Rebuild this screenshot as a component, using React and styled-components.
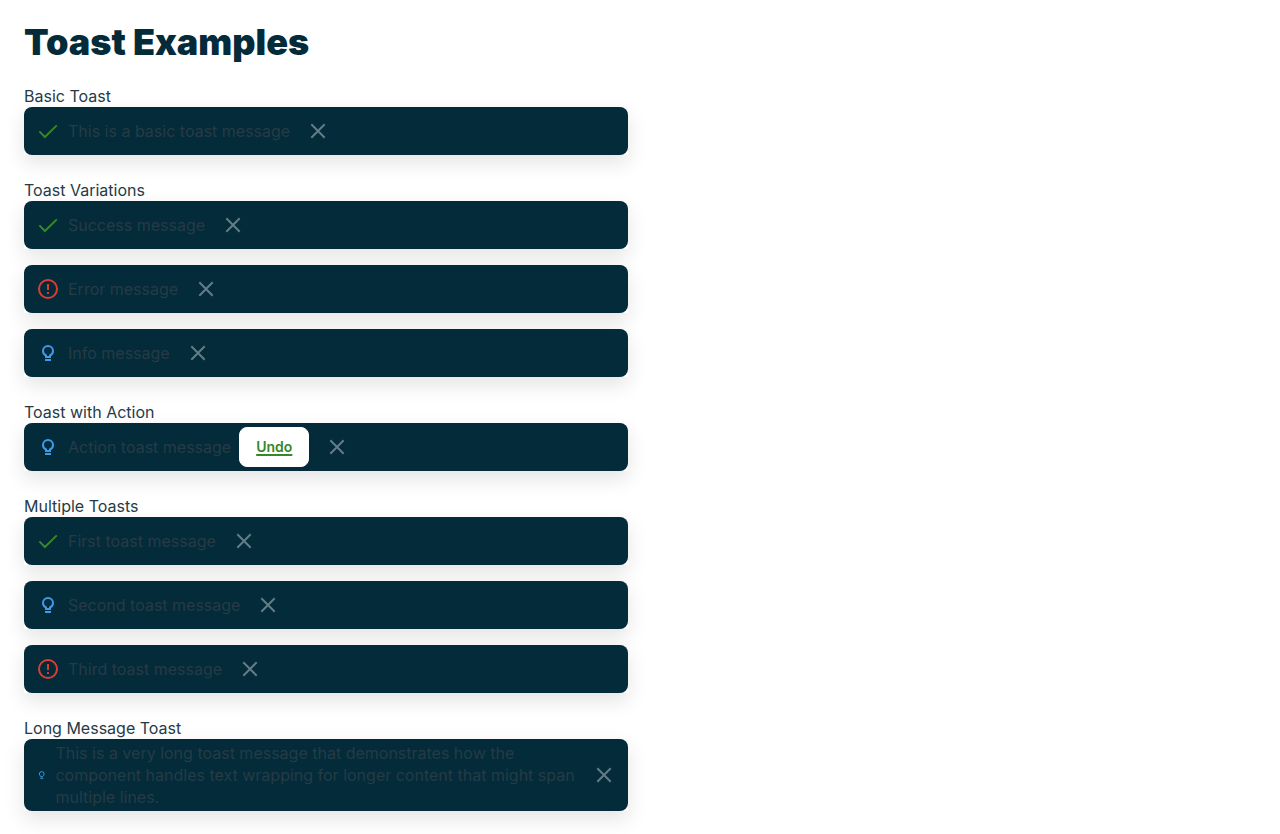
import React, { useId } from "react";
import styled, { createGlobalStyle } from "styled-components";

const GlobalStyle = createGlobalStyle`
  *, *::before, *::after { box-sizing: border-box; }
  body {
    margin: 0;
    background: #fff;
    color: #263b46;
    font: 400 16px/22px Inter, "Liberation Sans", sans-serif;
  }
`;

const Page = styled.main`
  display: grid;
  grid-template-columns: 1fr 1fr;
  column-gap: 24px;
  padding: 24px;
`;

const Column = styled.div`
  display: flex;
  flex-direction: column;
  gap: 24px;
`;

const Title = styled.h1`
  margin: 0;
  color: #032b3a;
  font-size: 36px;
  font-weight: 900;
  line-height: 37px;
`;

const Label = styled.h2`
  margin: 0;
  font-size: 16px;
  font-weight: 400;
  line-height: 22px;
`;

const Stack = styled.div`
  display: flex;
  flex-direction: column;
  gap: 16px;
`;

const Shadow = styled.div`
  box-shadow: 0 8px 20px rgba(0, 0, 0, 0.11);
`;

const ToastBox = styled.div`
  display: flex;
  align-items: center;
  gap: 8px;
  min-height: 48px;
  padding: 3px 4px 3px 12px;
  border-radius: 8px;
  background: #032b3a;
`;

const tones = { success: "#368727", error: "#da3e32", info: "#3d9be9" };

const StatusIcon = styled.svg`
  width: 24px;
  height: 24px;
  min-width: 0;
  fill: none;
  stroke: ${(p) => tones[p.$tone]};
  stroke-width: 2;
`;

const Message = styled.span`
  color: #263b46;
`;

const ActionButton = styled.button`
  flex: none;
  height: 40px;
  padding: 0 16px;
  border: 1px solid #fff;
  border-radius: 8px;
  background: #fff;
  color: #368727;
  font: 600 14px/20px Inter, "Liberation Sans", sans-serif;
  text-decoration: underline;
  text-decoration-thickness: 2px;
  text-underline-offset: 2px;
  cursor: pointer;
`;

const CloseButton = styled.button`
  display: flex;
  flex: none;
  align-items: center;
  justify-content: center;
  width: 40px;
  height: 40px;
  padding: 0;
  border: 0;
  border-radius: 8px;
  background: transparent;
  color: #647c87;
  cursor: pointer;
`;

const CloseIcon = styled.svg`
  width: 24px;
  height: 24px;
  fill: none;
  stroke: currentColor;
  stroke-width: 2;
`;

const shapes = {
  success: <path d="M3.4 12.4 8.9 18 20.8 6.4" />,
  error: (
    <>
      <circle cx="12" cy="12" r="9" />
      <path d="M12 7v6M12 15v2" />
    </>
  ),
  info: (
    <>
      <path d="M10 16v-1.6C8.2 13.5 7 11.8 7 9.9a5 5 0 0 1 10 0c0 1.9-1.2 3.6-3 4.5V16z" />
      <path d="M9 19h6" />
    </>
  ),
};

function Toast({ tone, action, children }) {
  return (
    <Shadow>
      <ToastBox role="status">
        <StatusIcon $tone={tone} viewBox="0 0 24 24" aria-hidden="true">
          {shapes[tone]}
        </StatusIcon>
        <Message>{children}</Message>
        {action && <ActionButton type="button">{action}</ActionButton>}
        <CloseButton type="button" aria-label="Close">
          <CloseIcon viewBox="0 0 24 24" aria-hidden="true">
            <path d="m5.3 5.3 13.4 13.4M18.7 5.3 5.3 18.7" />
          </CloseIcon>
        </CloseButton>
      </ToastBox>
    </Shadow>
  );
}

function Section({ label, children }) {
  const id = useId();
  return (
    <section aria-labelledby={id}>
      <Label id={id}>{label}</Label>
      <Stack>{children}</Stack>
    </section>
  );
}

export default function App() {
  return (
    <>
      <GlobalStyle />
      <Page>
        <Column>
          <Title>Toast Examples</Title>
          <Section label="Basic Toast">
            <Toast tone="success">This is a basic toast message</Toast>
          </Section>
          <Section label="Toast Variations">
            <Toast tone="success">Success message</Toast>
            <Toast tone="error">Error message</Toast>
            <Toast tone="info">Info message</Toast>
          </Section>
          <Section label="Toast with Action">
            <Toast tone="info" action="Undo">Action toast message</Toast>
          </Section>
          <Section label="Multiple Toasts">
            <Toast tone="success">First toast message</Toast>
            <Toast tone="info">Second toast message</Toast>
            <Toast tone="error">Third toast message</Toast>
          </Section>
          <Section label="Long Message Toast">
            <Toast tone="info">
              This is a very long toast message that demonstrates how the component
              handles text wrapping for longer content that might span multiple lines.
            </Toast>
          </Section>
        </Column>
      </Page>
    </>
  );
}
